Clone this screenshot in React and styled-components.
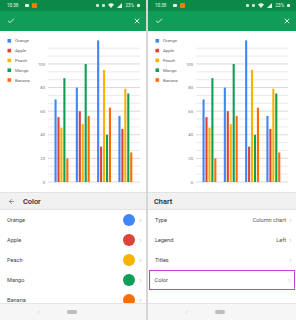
import React from 'react'
import styled, { createGlobalStyle } from 'styled-components'
import { Check, X, ArrowLeft, ChevronRight, ChevronLeft } from 'lucide-react'

const GlobalStyle = createGlobalStyle`
  body {
    margin: 0;
    background: #dcdcdc;
    font-family: Roboto, "Noto Sans", sans-serif;
  }
`

const series = [
  { name: 'Orange', color: '#4285f4', values: [70, 80, 120, 56] },
  { name: 'Apple', color: '#db4437', values: [55, 60, 30, 45] },
  { name: 'Peach', color: '#f4b400', values: [46, 49, 95, 79] },
  { name: 'Mango', color: '#0f9d58', values: [88, 100, 40, 75] },
  { name: 'Banana', color: '#ff6d01', values: [20, 56, 63, 25] },
]

const Page = styled.div`
  display: grid;
  grid-template-columns: 146px 148px;
  column-gap: 2px;
  width: 296px;
  height: 320px;
  background: #d6d6d6;
`

const Phone = styled.div`
  display: flex;
  flex-direction: column;
  height: 320px;
  overflow: hidden;
  background: #fff;
`

const StatusBar = styled.div`
  height: 11px;
  flex: none;
  display: flex;
  align-items: center;
  gap: 3px;
  padding: 0 6px 0 7px;
  background: #0b8a47;
  color: #e8f5ec;
  font-size: 4.6px;
`

const Spacer = styled.div`
  flex: 1;
`

const Dot = styled.span`
  width: ${(p) => p.size || 4}px;
  height: ${(p) => p.size || 4}px;
  border-radius: 1px;
  background: ${(p) => p.color};
`

const AppBar = styled.div`
  height: 20px;
  flex: none;
  display: flex;
  align-items: center;
  justify-content: space-between;
  padding: 0 5px 0 7px;
  background: #0f9d58;
  color: #fff;
`

const ChartBox = styled.div`
  height: 161px;
  flex: none;
  background: #fff;
`

const SectionHeader = styled.div`
  height: 16px;
  flex: none;
  display: flex;
  align-items: center;
  gap: 8px;
  padding: 0 6px;
  background: #f1f1f1;
  border-top: 1px solid #e2e2e2;
  border-bottom: 1px solid #e2e2e2;
  color: #222;
  font-size: 7.4px;
  font-weight: 500;
  svg {
    margin-left: 2px;
    color: #555;
  }
`

const List = styled.div`
  flex: 1;
  overflow: hidden;
  display: flex;
  flex-direction: column;
  background: #fff;
`

const Row = styled.div`
  height: 20px;
  flex: none;
  box-sizing: border-box;
  display: flex;
  align-items: center;
  gap: 2px;
  padding: 0 2px 0 6px;
  color: #444;
  font-size: 5.6px;
  border: 1.4px solid ${(p) => (p.selected ? '#c13ee0' : 'transparent')};
  margin: 0 ${(p) => (p.selected ? 1 : 0)}px;
  padding-left: ${(p) => (p.selected ? 4.6 : 6)}px;
  svg {
    color: #8a8a8a;
    flex: none;
  }
`

const Label = styled.span`
  flex: 1;
`

const Value = styled.span`
  color: #555;
`

const Swatch = styled.span`
  width: 12px;
  height: 12px;
  border-radius: 50%;
  background: ${(p) => p.color};
  margin-right: 1px;
`

const NavBar = styled.div`
  height: 16px;
  flex: none;
  display: flex;
  align-items: center;
  gap: 26px;
  padding-left: 36px;
  background: #f6f6f6;
  border-top: 1px solid #e4e4e4;
  svg {
    color: #b0b0b0;
  }
`

const Pill = styled.span`
  width: 10px;
  height: 4px;
  border-radius: 2px;
  background: #bdbdbd;
`

const base = 151
const unit = 1.18
const groupStart = [54.5, 75.8, 97.1, 118.4]

const Chart = () => (
  <svg width="146" height="161" viewBox="0 0 146 161">
    {Array.from({ length: 18 }, (_, k) => (
      <line
        key={k}
        x1="48"
        x2="140"
        y1={base - k * 7.87}
        y2={base - k * 7.87}
        stroke={k % 3 === 0 ? '#cfcfcf' : '#e4e4e4'}
        strokeWidth="0.8"
      />
    ))}
    {[0, 20, 40, 60, 80, 100].map((v) => (
      <text
        key={v}
        x="45"
        y={base - v * unit + 1.5}
        textAnchor="end"
        fontSize="4.2"
        fill="#777"
        fontFamily="Roboto, sans-serif"
      >
        {v}
      </text>
    ))}
    {series.map((s, i) => (
      <g key={s.name}>
        <rect x="7.5" y={8 + i * 9.8} width="3.6" height="3.6" fill={s.color} />
        <text x="15" y={11.4 + i * 9.8} fontSize="4.4" fill="#666" fontFamily="Roboto, sans-serif">
          {s.name}
        </text>
        {s.values.map((v, g) => (
          <rect
            key={g}
            x={groupStart[g] + i * 2.95}
            y={base - v * unit}
            width="2.1"
            height={v * unit}
            fill={s.color}
          />
        ))}
      </g>
    ))}
  </svg>
)

const Status = () => (
  <StatusBar>
    <span>10:38</span>
    <Dot color="#e8f5ec" size={3.5} style={{ marginLeft: 4 }} />
    <Dot color="#f57c00" size={5} />
    <Spacer />
    <Dot color="#cfe8d8" size={3.5} />
    <Dot color="#cfe8d8" size={3} />
    <svg width="6" height="5" viewBox="0 0 12 10">
      <path d="M6 10 L0 3 Q6 -2 12 3 Z" fill="#e8f5ec" />
    </svg>
    <svg width="5" height="5" viewBox="0 0 10 10">
      <path d="M10 0 L10 10 L0 10 Z" fill="#e8f5ec" />
    </svg>
    <span>23%</span>
    <Dot color="#e8f5ec" size={3} />
  </StatusBar>
)

const Screen = ({ title, back, children }) => (
  <Phone>
    <Status />
    <AppBar>
      <Check size={8} strokeWidth={2.6} />
      <X size={8} strokeWidth={2.6} />
    </AppBar>
    <ChartBox>
      <Chart />
    </ChartBox>
    <SectionHeader>
      {back && <ArrowLeft size={7} strokeWidth={2} />}
      <span>{title}</span>
    </SectionHeader>
    <List>{children}</List>
    <NavBar>
      <ChevronLeft size={5} strokeWidth={2} />
      <Pill />
    </NavBar>
  </Phone>
)

const settings = [
  { name: 'Type', value: 'Column chart' },
  { name: 'Legend', value: 'Left' },
  { name: 'Titles', value: '' },
  { name: 'Color', value: '', selected: true },
]

export default () => (
  <>
    <GlobalStyle />
    <Page>
      <Screen title="Color" back>
        {series.map((s) => (
          <Row key={s.name}>
            <Label>{s.name}</Label>
            <Swatch color={s.color} />
            <ChevronRight size={5} strokeWidth={2} />
          </Row>
        ))}
      </Screen>
      <Screen title="Chart">
        {settings.map((s) => (
          <Row key={s.name} selected={s.selected}>
            <Label>{s.name}</Label>
            <Value>{s.value}</Value>
            <ChevronRight size={5} strokeWidth={2} />
          </Row>
        ))}
      </Screen>
    </Page>
  </>
)
